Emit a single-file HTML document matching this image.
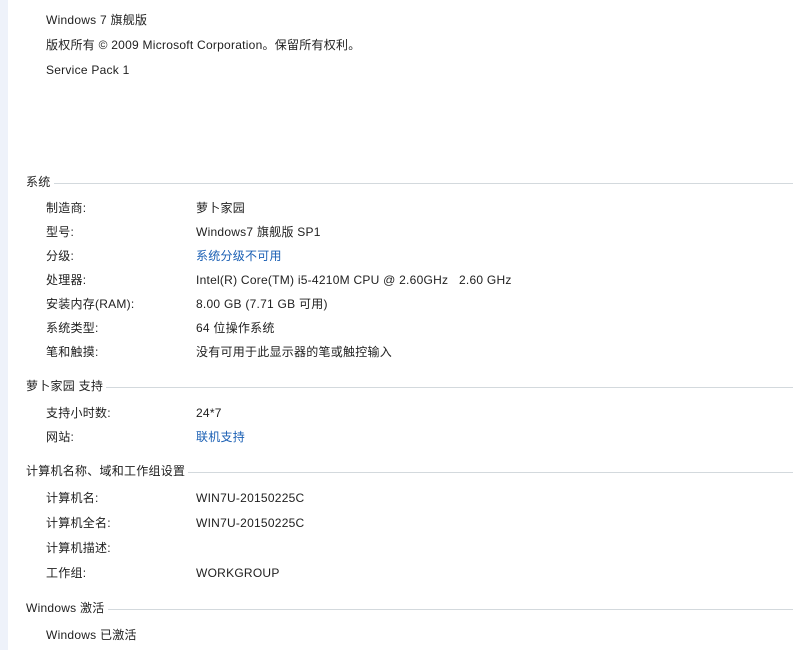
<!DOCTYPE html>
<html><head><meta charset="utf-8"><style>
body{margin:0;width:793px;height:650px;background:#fff;position:relative;overflow:hidden;font-family:"Liberation Sans","Noto Sans CJK SC",sans-serif;font-size:12px;color:#1e1e1e;letter-spacing:0.25px}
.strip{position:absolute;left:0;top:0;width:8px;height:650px;background:#eef2fa}
.t{position:absolute;white-space:nowrap;line-height:14px;margin-top:1px}
.h{position:absolute;left:26px;right:0;display:flex;align-items:center;line-height:14px;margin-top:1px}
.h span{white-space:nowrap;padding-right:3px}
.h i{flex:1;height:1px;background:#d3d9dd;margin-top:2px}
.l{color:#1a5fb4}
</style></head><body>
<div class="strip"></div>
<div class="t" style="left:46px;top:12px">Windows 7 旗舰版</div>
<div class="t" style="left:46px;top:37px">版权所有 © 2009 Microsoft Corporation。保留所有权利。</div>
<div class="t" style="left:46px;top:62px">Service Pack 1</div>

<div class="h" style="top:174px"><span>系统</span><i></i></div>
<div class="t" style="left:46px;top:200px">制造商:</div><div class="t" style="left:196px;top:200px">萝卜家园</div>
<div class="t" style="left:46px;top:224px">型号:</div><div class="t" style="left:196px;top:224px">Windows7 旗舰版 SP1</div>
<div class="t" style="left:46px;top:248px">分级:</div><div class="t l" style="left:196px;top:248px">系统分级不可用</div>
<div class="t" style="left:46px;top:272px">处理器:</div><div class="t" style="left:196px;top:272px">Intel(R) Core(TM) i5-4210M CPU @ 2.60GHz&nbsp;&nbsp;&nbsp;2.60 GHz</div>
<div class="t" style="left:46px;top:296px">安装内存(RAM):</div><div class="t" style="left:196px;top:296px">8.00 GB (7.71 GB 可用)</div>
<div class="t" style="left:46px;top:320px">系统类型:</div><div class="t" style="left:196px;top:320px">64 位操作系统</div>
<div class="t" style="left:46px;top:344px">笔和触摸:</div><div class="t" style="left:196px;top:344px">没有可用于此显示器的笔或触控输入</div>

<div class="h" style="top:378px"><span>萝卜家园 支持</span><i></i></div>
<div class="t" style="left:46px;top:405px">支持小时数:</div><div class="t" style="left:196px;top:405px">24*7</div>
<div class="t" style="left:46px;top:429px">网站:</div><div class="t l" style="left:196px;top:429px">联机支持</div>

<div class="h" style="top:463px"><span>计算机名称、域和工作组设置</span><i></i></div>
<div class="t" style="left:46px;top:490px">计算机名:</div><div class="t" style="left:196px;top:490px">WIN7U-20150225C</div>
<div class="t" style="left:46px;top:515px">计算机全名:</div><div class="t" style="left:196px;top:515px">WIN7U-20150225C</div>
<div class="t" style="left:46px;top:540px">计算机描述:</div>
<div class="t" style="left:46px;top:565px">工作组:</div><div class="t" style="left:196px;top:565px">WORKGROUP</div>

<div class="h" style="top:600px"><span>Windows 激活</span><i></i></div>
<div class="t" style="left:46px;top:627px">Windows 已激活</div>
</body></html>
